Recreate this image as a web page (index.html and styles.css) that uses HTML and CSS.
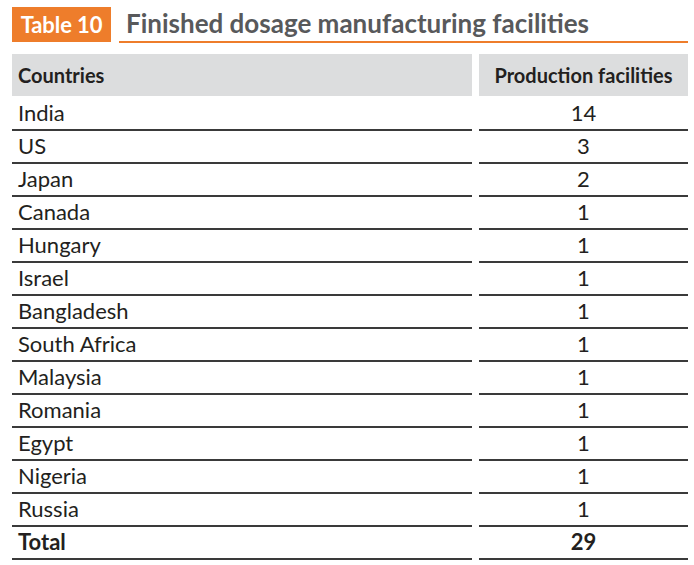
FILE: index.html
```html
<!DOCTYPE html>
<html>
<head>
<meta charset="utf-8">
<link rel="stylesheet" href="styles.css">
</head>
<body>
<div class="page">
  <div class="caption">
    <span class="tag">Table 10</span>
    <h1 class="title">Finished dosage manufacturing facilities</h1>
  </div>
  <div class="table">
    <div class="row head">
      <div class="cell c1">Countries</div>
      <div class="cell c2">Production facilities</div>
    </div>
    <div class="row"><div class="cell c1">India</div><div class="cell c2">14</div></div>
    <div class="row"><div class="cell c1">US</div><div class="cell c2">3</div></div>
    <div class="row"><div class="cell c1">Japan</div><div class="cell c2">2</div></div>
    <div class="row"><div class="cell c1">Canada</div><div class="cell c2">1</div></div>
    <div class="row"><div class="cell c1">Hungary</div><div class="cell c2">1</div></div>
    <div class="row"><div class="cell c1">Israel</div><div class="cell c2">1</div></div>
    <div class="row"><div class="cell c1">Bangladesh</div><div class="cell c2">1</div></div>
    <div class="row"><div class="cell c1">South Africa</div><div class="cell c2">1</div></div>
    <div class="row"><div class="cell c1">Malaysia</div><div class="cell c2">1</div></div>
    <div class="row"><div class="cell c1">Romania</div><div class="cell c2">1</div></div>
    <div class="row"><div class="cell c1">Egypt</div><div class="cell c2">1</div></div>
    <div class="row"><div class="cell c1">Nigeria</div><div class="cell c2">1</div></div>
    <div class="row"><div class="cell c1">Russia</div><div class="cell c2">1</div></div>
    <div class="row total"><div class="cell c1">Total</div><div class="cell c2">29</div></div>
  </div>
</div>
</body>
</html>
```
FILE: styles.css
```css
html, body {
  margin: 0;
  padding: 0;
  background: #ffffff;
}
body {
  font-family: Lato, "Open Sans", sans-serif;
  color: #231f20;
}
.page {
  width: 676px;
  padding: 7px 0 0 12px;
}
.caption {
  display: flex;
  align-items: flex-start;
  gap: 8px;
}
.tag {
  display: flex;
  align-items: center;
  justify-content: center;
  width: 99px;
  height: 35px;
  background: #ee7d2b;
  color: #ffffff;
  font-weight: 700;
  font-size: 22px;
  letter-spacing: -0.1px;
}
.title {
  flex: 1;
  margin: 0;
  height: 36px;
  box-sizing: border-box;
  padding-left: 7px;
  font-size: 26px;
  line-height: normal;
  font-weight: 700;
  color: #58595b;
  border-bottom: 2px solid #ee7d2b;
}
.table {
  margin-top: 11px;
  display: flex;
  flex-direction: column;
}
.row {
  display: grid;
  grid-template-columns: 460px 209px;
  column-gap: 7px;
  height: 33px;
}
.row .cell {
  border-bottom: 2px solid #3a3a3a;
  display: flex;
  align-items: center;
  font-size: 22px;
  box-sizing: border-box;
  padding-bottom: 3px;
}
.row .c1 {
  padding-left: 6px;
}
.row .c2 {
  justify-content: center;
}
.row.head {
  height: 42px;
  margin-bottom: 2px;
}
.row.head .cell {
  background: #dcddde;
  border-bottom: none;
  padding-bottom: 0;
  font-weight: 700;
  font-size: 20px;
  color: #231f20;
}
.row.total .cell {
  font-weight: 700;
}
```
